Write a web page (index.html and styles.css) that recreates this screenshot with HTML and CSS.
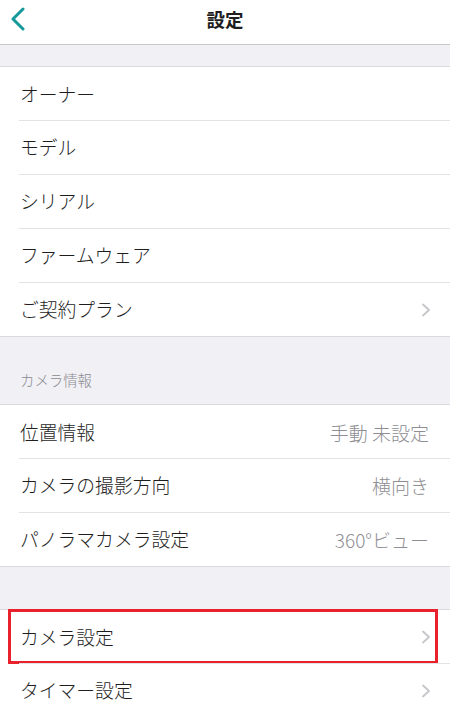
FILE: index.html
```html
<!DOCTYPE html>
<html lang="ja">
<head>
<meta charset="utf-8">
<title>設定</title>
<link rel="stylesheet" href="styles.css">
</head>
<body>
<div class="screen">
  <header class="navbar">
    <span class="back">
      <svg width="16" height="24" viewBox="0 0 16 24"><path d="M13 2 L3 12 L13 22" fill="none" stroke="#16999b" stroke-width="3" stroke-linecap="round" stroke-linejoin="round"/></svg>
    </span>
    <h1 class="title">設定</h1>
  </header>

  <div class="gap gap-top"></div>
  <ul class="group">
    <li class="row"><span class="label">オーナー</span></li>
    <li class="row"><span class="label">モデル</span></li>
    <li class="row"><span class="label">シリアル</span></li>
    <li class="row"><span class="label">ファームウェア</span></li>
    <li class="row"><span class="label">ご契約プラン</span><span class="chev"><svg width="10" height="14" viewBox="0 0 10 14"><path d="M2 1.5 L8 7 L2 12.5" fill="none" stroke="#c5c5ca" stroke-width="1.8" stroke-linecap="round" stroke-linejoin="round"/></svg></span></li>
  </ul>

  <div class="section-head">カメラ情報</div>
  <ul class="group">
    <li class="row"><span class="label">位置情報</span><span class="value">手動 未設定</span></li>
    <li class="row"><span class="label">カメラの撮影方向</span><span class="value">横向き</span></li>
    <li class="row"><span class="label">パノラマカメラ設定</span><span class="value">360°ビュー</span></li>
  </ul>

  <div class="gap gap-mid"></div>
  <ul class="group">
    <li class="row highlighted"><span class="label">カメラ設定</span><span class="chev"><svg width="10" height="14" viewBox="0 0 10 14"><path d="M2 1.5 L8 7 L2 12.5" fill="none" stroke="#c5c5ca" stroke-width="1.8" stroke-linecap="round" stroke-linejoin="round"/></svg></span></li>
    <li class="row"><span class="label">タイマー設定</span><span class="chev"><svg width="10" height="14" viewBox="0 0 10 14"><path d="M2 1.5 L8 7 L2 12.5" fill="none" stroke="#c5c5ca" stroke-width="1.8" stroke-linecap="round" stroke-linejoin="round"/></svg></span></li>
  </ul>
</div>
</body>
</html>
```
FILE: styles.css
```css
* { box-sizing: border-box; }
html, body {
  margin: 0;
  padding: 0;
  background: #f0f0f5;
  height: 100%;
  overflow: hidden;
}
body {
  font-family: "Noto Sans CJK JP", "Noto Sans", sans-serif;
  font-weight: 300;
  color: #1e1e1e;
}
.screen {
  width: 450px;
  height: 710px;
  overflow: hidden;
  background: #f0f0f5;
}
.navbar {
  height: 45px;
  background: #ffffff;
  border-bottom: 1px solid #c9c9cd;
  display: flex;
  align-items: center;
  justify-content: center;
  position: relative;
}
.back {
  position: absolute;
  left: 10px;
  top: 7px;
  display: flex;
}
.title {
  margin: 0;
  font-size: 18.5px;
  font-weight: 700;
  line-height: 1;
  color: #1e1e1e;
  padding-bottom: 6px;
}
.gap-top { height: 21px; }
.gap-mid { height: 42px; }
.group {
  list-style: none;
  margin: 0;
  padding: 0;
  background: #ffffff;
  border-top: 1px solid #d9d9de;
  border-bottom: 1px solid #d9d9de;
}
.row {
  height: 54px;
  display: flex;
  align-items: center;
  justify-content: space-between;
  padding: 0 20px 0 20px;
  position: relative;
  font-size: 18.8px;
}
.row + .row::before {
  content: "";
  position: absolute;
  left: 19px;
  right: 0;
  top: 0;
  height: 1px;
  background: #e3e3e6;
}
.group .row:first-child { height: 53px; }
.label { line-height: 1; padding-top: 1px; }
.value {
  color: #8e8e93;
  font-size: 19px;
  line-height: 1;
  padding-top: 1px;
  margin-right: 1px;
}
.chev {
  display: flex;
  margin-right: -1px;
  padding-top: 1px;
}
.section-head {
  height: 67px;
  padding: 36px 0 0 20px;
  font-size: 14.4px;
  color: #8a8a8f;
  line-height: 1;
}
.highlighted::after {
  content: "";
  position: absolute;
  left: 8px;
  right: 12px;
  top: -1px;
  bottom: -1px;
  border: 3px solid #e8212c;
}
```
